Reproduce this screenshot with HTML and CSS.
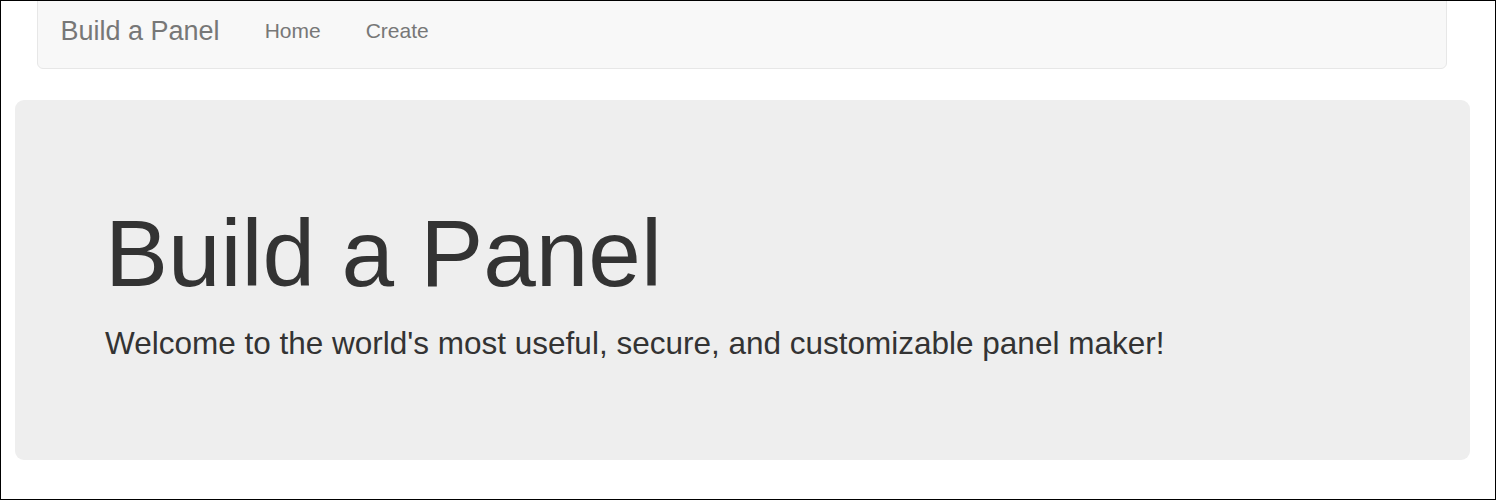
FILE: index.html
```html
<!DOCTYPE html>
<html lang="en">
<head>
<meta charset="utf-8">
<title>Build a Panel</title>
<link rel="stylesheet" href="styles.css">
</head>
<body>
<div class="frame">
  <nav class="navbar">
    <a class="brand" href="#">Build a Panel</a>
    <ul class="nav">
      <li><a href="#">Home</a></li>
      <li><a href="#">Create</a></li>
    </ul>
  </nav>
  <div class="jumbotron">
    <h1>Build a Panel</h1>
    <p>Welcome to the world's most useful, secure, and customizable panel maker!</p>
  </div>
</div>
</body>
</html>
```
FILE: styles.css
```css
html, body {
  margin: 0;
  padding: 0;
  background: #fff;
}
body {
  font-family: "Liberation Sans", Arial, sans-serif;
  color: #333;
}
.frame {
  box-sizing: border-box;
  width: 1496px;
  height: 500px;
  border: 1px solid #000;
  overflow: hidden;
}
.navbar {
  box-sizing: border-box;
  display: flex;
  align-items: flex-start;
  width: 1410px;
  height: 77px;
  margin: -9px 0 31px 36px;
  background: #f8f8f8;
  border: 1px solid #e7e7e7;
  border-radius: 6px;
}
.brand {
  padding: 22.5px;
  font-size: 27px;
  line-height: 30px;
  color: #777;
  text-decoration: none;
}
.nav {
  display: flex;
  list-style: none;
  margin: 0;
  padding: 0;
}
.nav a {
  display: block;
  padding: 22.5px;
  font-size: 21px;
  line-height: 30px;
  color: #777;
  text-decoration: none;
}
.jumbotron {
  box-sizing: border-box;
  width: 1455px;
  height: 360px;
  margin-left: 14px;
  padding: 72px 90px;
  background: #eee;
  border-radius: 9px;
}
.jumbotron h1 {
  margin: 30px 0 15px;
  font-size: 94.5px;
  font-weight: 500;
  line-height: 1.1;
  color: #333;
}
.jumbotron p {
  margin: 0 0 22.5px;
  font-size: 31.5px;
  line-height: 45px;
  font-weight: 200;
}
```
